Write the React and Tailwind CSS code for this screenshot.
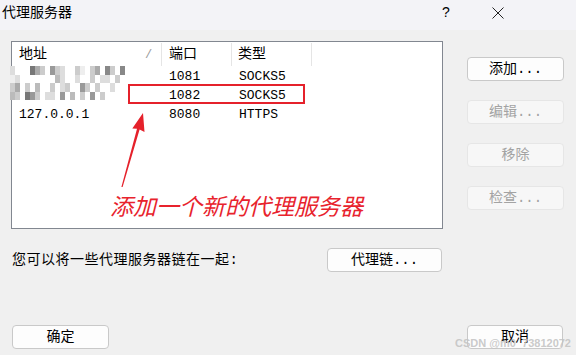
const GRAYS = {
  '.': 'bg-transparent',
  '1': 'bg-[#eeeeee]',
  '2': 'bg-[#dddddd]',
  '3': 'bg-[#cccccc]',
  '4': 'bg-[#bbbbbb]',
  '5': 'bg-[#aaaaaa]',
  '6': 'bg-[#999999]',
  '7': 'bg-[#888888]',
  '8': 'bg-[#777777]',
};

// pixelated (redacted) addresses
const MOSAIC = [
  '2...853.632..31.35.73.7',
  '12.......42..2..3.22.3.',
  '35.3.4..3.23..63.3..2..',
  '43.863.22.6.4.3.6.3....',
];

const ROWS = [
  { addr: '', port: '1081', type: 'SOCKS5' },
  { addr: '', port: '1082', type: 'SOCKS5' },
  { addr: '127.0.0.1', port: '8080', type: 'HTTPS' },
];

function Btn({ children, disabled, className = '' }) {
  return (
    <div
      className={`h-[24px] flex items-center justify-center rounded-[4px] border text-[14px] ${
        disabled
          ? 'bg-[#f7f7f7] border-[#e6e6e6] text-[#a3a3a3]'
          : 'bg-[#fdfdfd] border-[#c9c9c9] text-black'
      } ${className}`}
    >
      {children}
    </div>
  );
}

export default function App() {
  return (
    <div className="w-[576px] h-[355px] relative overflow-hidden bg-[#f0f0f0] text-black font-[Liberation_Mono,Noto_Sans_CJK_SC,monospace]">
      {/* Title bar */}
      <div className="h-[30px] bg-[#f3f3f7] flex items-center pl-[2px] relative">
        <span className="text-[14px] leading-none -mt-[5px]">代理服务器</span>
        <span className="absolute left-[442px] top-[5px] text-[14px] leading-none font-[Liberation_Sans,sans-serif]">?</span>
        <svg className="absolute left-[492px] top-[7px]" width="12" height="12" viewBox="0 0 12 12">
          <path d="M0.5 0.5 L11.5 11.5 M11.5 0.5 L0.5 11.5" stroke="#222" strokeWidth="1" fill="none" />
        </svg>
      </div>

      {/* List + side buttons */}
      <div className="flex pl-[11px] mt-[11px]">
        <div className="w-[432px] h-[188px] border border-[#828790] bg-white relative">
          <div className="flex h-[25px] text-[14px]">
            <div className="w-[150px] flex items-center pl-[7px] border-r border-[#e5e5e5] my-[1px] relative">
              地址
              <span className="absolute left-[133px] text-[12px] text-[#9a9a9a]">/</span>
            </div>
            <div className="w-[70px] flex items-center pl-[7px] border-r border-[#e5e5e5] my-[1px]">端口</div>
            <div className="w-[80px] flex items-center pl-[6px] border-r border-[#e5e5e5] my-[1px]">类型</div>
          </div>
          {ROWS.map((r, i) => (
            <div key={i} className="flex h-[19px] items-center text-[13px]">
              <div className="w-[150px] pl-[7px]">{r.addr}</div>
              <div className="w-[70px] pl-[7px]">{r.port}</div>
              <div className="w-[80px] pl-[7px]">{r.type}</div>
            </div>
          ))}

          {/* redaction mosaic */}
          <div className="absolute left-[-2px] top-[24px] flex flex-col">
            {MOSAIC.map((row, ri) => (
              <div key={ri} className="flex">
                {row.split('').map((c, ci) => (
                  <div key={ci} className={`w-[5px] h-[8.5px] ${GRAYS[c]}`} />
                ))}
              </div>
            ))}
          </div>
        </div>

        <div className="ml-[24px] pt-[16px] flex flex-col gap-[19px] w-[97px]">
          <Btn>添加...</Btn>
          <Btn disabled>编辑...</Btn>
          <Btn disabled>移除</Btn>
          <Btn disabled>检查...</Btn>
        </div>
      </div>

      {/* Chain row */}
      <div className="flex items-center justify-between w-[442px] pl-[12px] mt-[19px]">
        <span className="text-[14px] tracking-[0.5px]">您可以将一些代理服务器链在一起:</span>
        <Btn className="w-[115px]">代理链...</Btn>
      </div>

      {/* Bottom buttons */}
      <div className="flex justify-between pl-[12px] pr-[13px] mt-[53px]">
        <Btn className="w-[97px]">确定</Btn>
        <Btn className="w-[96px]">取消</Btn>
      </div>

      {/* Annotations */}
      <div className="absolute left-[128px] top-[84px] w-[177px] h-[20px] border-2 border-[#e5212b]" />
      <svg className="absolute left-0 top-0 pointer-events-none" width="576" height="355">
        <polygon
          points="143,113 144.5,132 139.6,129.5 122.6,187 121.4,187 137,128.7 132.3,128.4"
          fill="#e5212b"
        />
      </svg>
      <div className="absolute left-[110px] top-[198px] text-[23px] italic leading-none text-[#e8232d]">
        添加一个新的代理服务器
      </div>

      <div className="absolute right-[5px] bottom-[6px] text-[11px] font-bold leading-none text-[#c4c4c4]/90 font-[Liberation_Sans,sans-serif]">
        CSDN @m0_73812072
      </div>
    </div>
  );
}
